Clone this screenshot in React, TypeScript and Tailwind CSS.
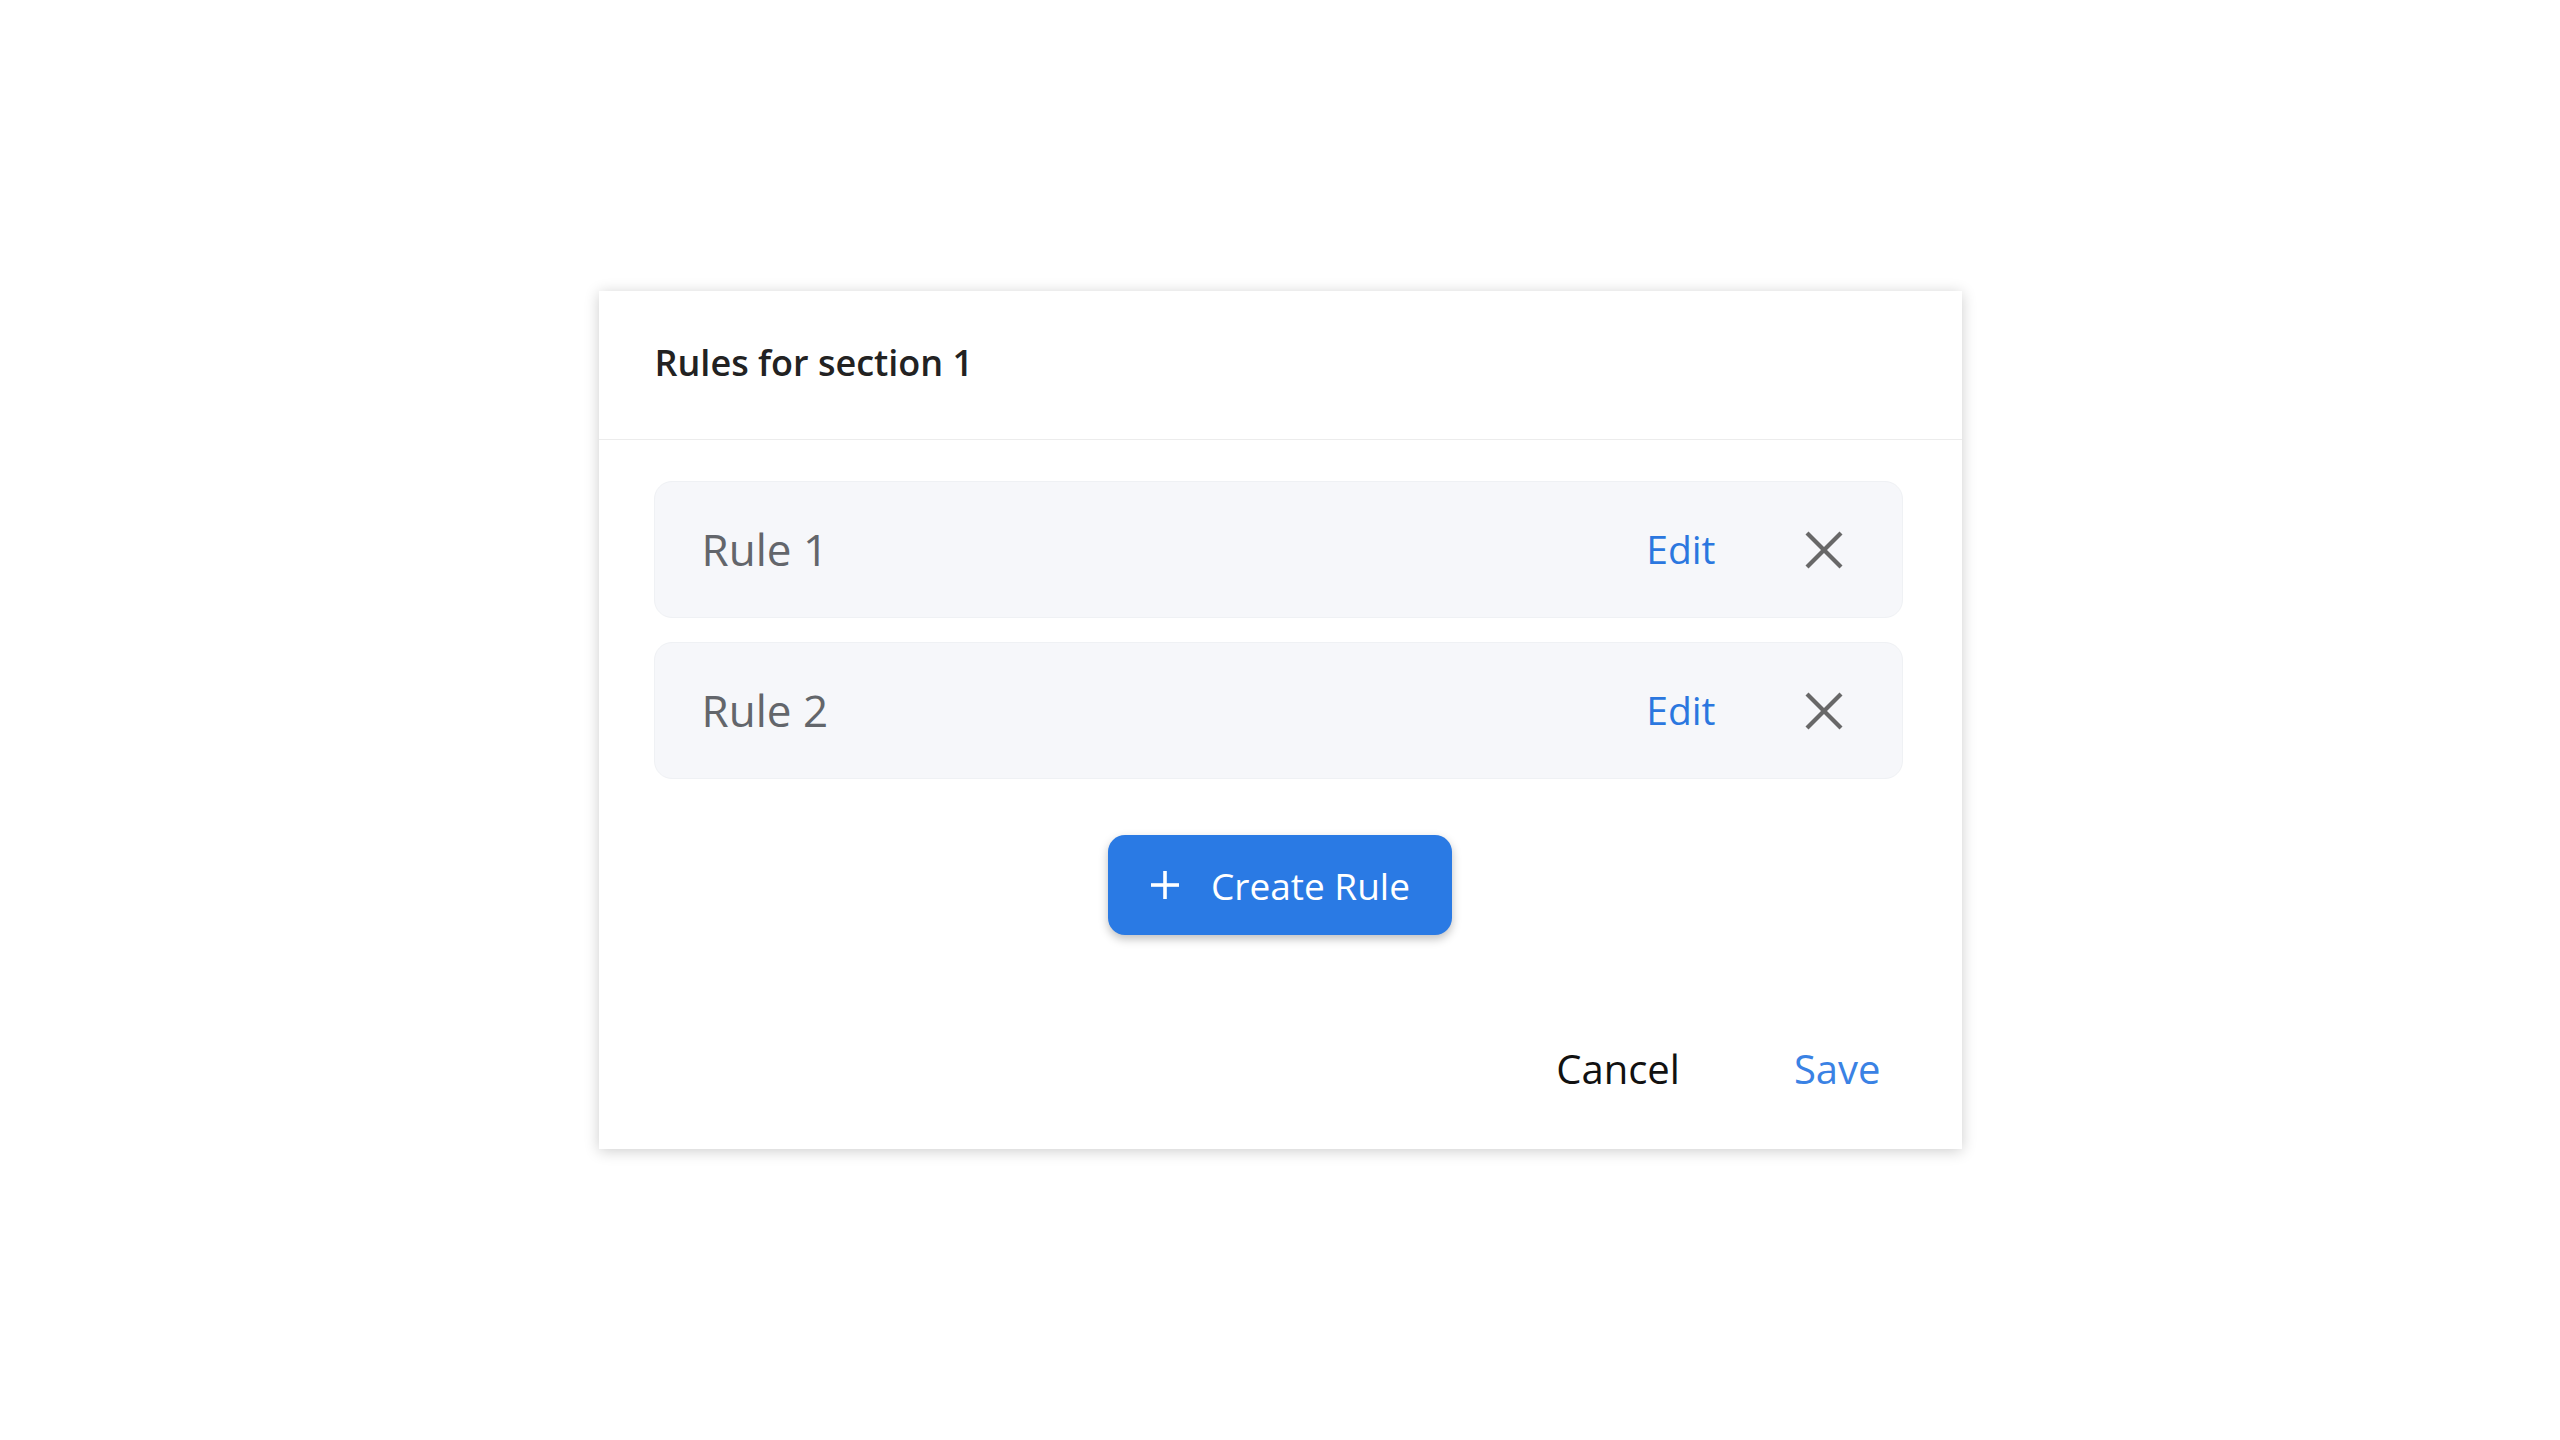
const rules = ["Rule 1", "Rule 2"];

const CloseIcon = () => (
  <svg width="44" height="44" viewBox="0 0 44 44" fill="none" stroke="#686868" strokeWidth="4.2">
    <line x1="5" y1="5" x2="39" y2="39" />
    <line x1="39" y1="5" x2="5" y2="39" />
  </svg>
);

const PlusIcon = () => (
  <svg width="30" height="30" viewBox="0 0 30 30" fill="none" stroke="#ffffff" strokeWidth="3.6">
    <line x1="15" y1="1" x2="15" y2="29" />
    <line x1="1" y1="15" x2="29" y2="15" />
  </svg>
);

const RuleRow = ({ name }: { name: string }) => {
  return (
    <div className="flex h-[137px] items-center rounded-[18px] border border-[#eff1f4] bg-[#f6f7fa] pl-[47px] pr-[56px]">
      <span className="flex-1 pb-[2px] text-[44px] leading-none text-[#63666b]">{name}</span>
      <a className="cursor-pointer pb-[2px] text-[39px] leading-none text-[#2b77df]">Edit</a>
      <button className="ml-[86px] flex items-center justify-center">
        <CloseIcon />
      </button>
    </div>
  );
};

export default function App() {
  return (
    <div
      className="flex min-h-screen items-center justify-center bg-white"
      style={{ fontFamily: '"Open Sans", "Noto Sans", sans-serif' }}
    >
      <div className="flex h-[858px] w-[1363px] flex-col bg-white shadow-[0_2px_14px_rgba(0,0,0,0.2)]">
        <header className="flex h-[149px] items-center border-b border-[#ececec] pb-[5px] pl-[56px]">
          <h2 className="text-[36px] font-semibold leading-none text-[#222222]">Rules for section 1</h2>
        </header>

        <div className="flex flex-col gap-[24px] pl-[55px] pr-[59px] pt-[41px]">
          {rules.map((r) => (
            <RuleRow key={r} name={r} />
          ))}
        </div>

        <div className="mt-[56px] flex justify-center">
          <button className="flex h-[100px] w-[344px] items-center rounded-[17px] bg-[#2a7ae4] pl-[42px] shadow-[0_4px_10px_rgba(0,0,0,0.25)]">
            <PlusIcon />
            <span className="ml-[31px] text-[37px] leading-none text-white">Create Rule</span>
          </button>
        </div>

        <footer className="mt-[56px] flex h-[158px] items-center justify-end gap-[114px] pb-[2px] pr-[81px]">
          <a className="cursor-pointer text-[40px] leading-none text-[#111111]">Cancel</a>
          <a className="cursor-pointer text-[40px] leading-none text-[#3a82e4]">Save</a>
        </footer>
      </div>
    </div>
  );
}
